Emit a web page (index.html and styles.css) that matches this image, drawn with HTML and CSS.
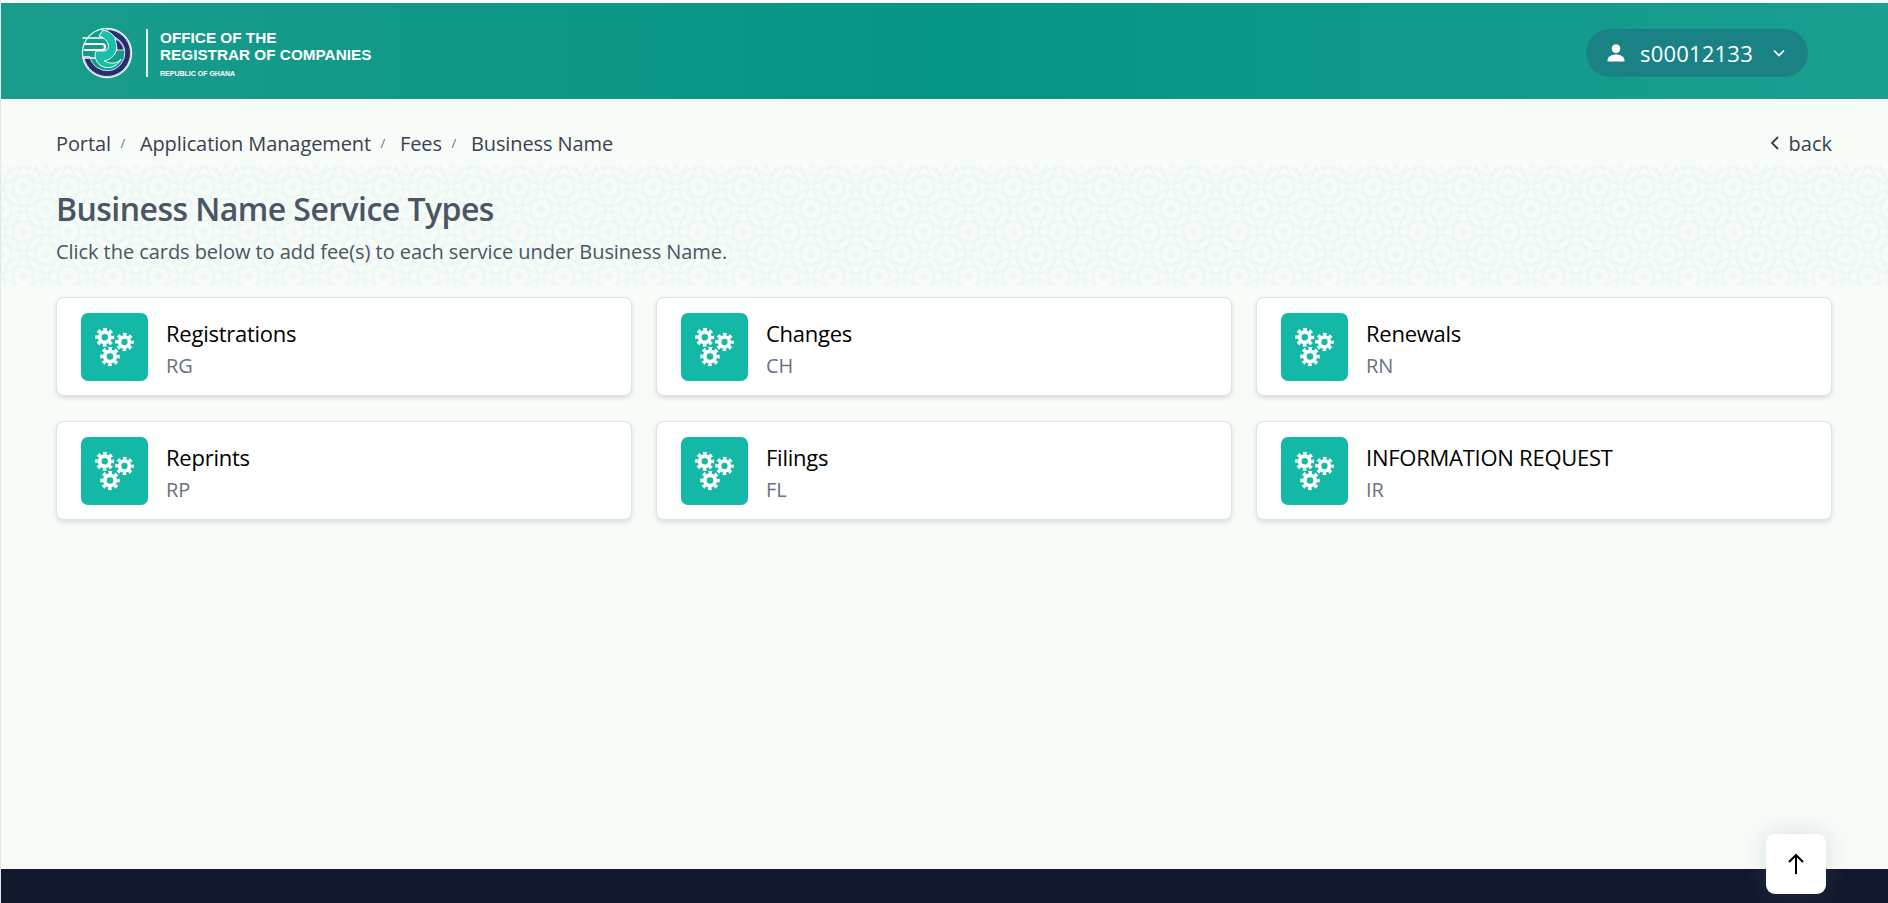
FILE: index.html
```html
<!DOCTYPE html>
<html lang="en">
<head>
    <meta charset="UTF-8">
    <meta name="viewport" content="width=device-width, initial-scale=1.0">
    <title>Business Name Service Types</title>
    <link rel="stylesheet" href="styles.css">
</head>
<body>
    <svg class="defs" width="0" height="0">
        <defs>
            <symbol id="gear" viewBox="0 0 20 20">
                <circle cx="10" cy="10" r="5.2" fill="none" stroke="#fff" stroke-width="3.8"/>
                <circle cx="10" cy="10" r="8.2" fill="none" stroke="#fff" stroke-width="3.2" stroke-dasharray="3.6 2.84" stroke-dashoffset="1.8"/>
            </symbol>
            <symbol id="cogs" viewBox="0 0 67 68">
                <use href="#gear" x="14" y="14.500" width="19.500" height="19.500"/>
                <use href="#gear" x="34" y="19.500" width="19" height="19"/>
                <use href="#gear" x="19" y="33.500" width="20" height="20"/>
            </symbol>
            <g id="rosette">
                <circle r="19.6" fill="none" stroke="#edf7f3" stroke-width="2.2"/>
                <circle r="10.6" fill="none" stroke="#edf7f3" stroke-width="2.2"/>
                <path d="M0-5.600Q1.600-1.600 5.600 0 1.600 1.600 0 5.600-1.600 1.600-5.600 0-1.600-1.600 0-5.600z" fill="#edf7f3"/>
            </g>
        </defs>
    </svg>

    <header class="topbar">
        <div class="brand">
            <svg class="brand-logo" viewBox="0 0 52 52" width="52" height="52">
                <circle cx="26" cy="26" r="25.2" fill="#fff"/>
                <circle cx="26" cy="26" r="24" fill="#129b8a"/>
                <path d="M26 2.500a23.500 23.500 0 1 1-23.200 27h6a17.700 17.700 0 1 0 17.200-21.200z" fill="#2b2a72" stroke="#fff" stroke-width=".8"/>
                <path d="M1.500 11h22c9 0 12 6 12 10s-3 9-9 10H2" fill="none" stroke="#fff" stroke-width="1.400"/>
                <path d="M22 3c10 2 15 9 14 18-1 7-7 12-13 13 8 4 14 2 17-2-4 9-15 11-21 6-5-4-6-10-4-14h9c3-1 4-4 3-7-1-4-5-7-9-8z" fill="#19bfa8" stroke="#fff" stroke-width="1"/>
                <path d="M3 17h18c2 0 3 1 3 3s-1 3-3 3H3" fill="none" stroke="#fff" stroke-width="2.200"/>
                <path d="M34 12c5 2 8 6 9 11h-7c0-4-1-8-2-11z" fill="#2b2a72" stroke="#fff" stroke-width=".8"/>
            </svg>
            <div class="brand-rule"></div>
            <div class="brand-text">
                <div class="brand-name">OFFICE OF THE<br>REGISTRAR OF COMPANIES</div>
                <div class="brand-sub">REPUBLIC OF GHANA</div>
            </div>
        </div>
        <div class="user-pill">
            <svg class="user-icon" viewBox="0 0 18 18" width="18" height="18">
                <circle cx="9" cy="4.600" r="4.300" fill="#fff"/>
                <path d="M.4 17.500c0-5 3.600-7 8.600-7s8.600 2 8.600 7z" fill="#fff"/>
            </svg>
            <span class="user-name">s00012133</span>
            <svg class="user-caret" viewBox="0 0 12 8" width="12" height="8">
                <path d="M1 1.500l5 5 5-5" fill="none" stroke="#fff" stroke-width="1.700"/>
            </svg>
        </div>
    </header>

    <main class="content">
        <div class="crumb-row">
            <nav class="crumbs">
                <a>Portal</a><span class="sep">/</span>
                <a>Application Management</a><span class="sep">/</span>
                <a>Fees</a><span class="sep">/</span>
                <a>Business Name</a>
            </nav>
            <a class="back">
                <svg viewBox="0 0 10 16" width="10" height="16">
                    <path d="M8 2L2 8l6 6" fill="none" stroke="#374151" stroke-width="1.8"/>
                </svg>
                back
            </a>
        </div>

        <section class="hero">
            <svg class="hero-bg" width="100%" height="100%">
                <defs>
                    <pattern id="rings" x="0" y="-0.8" width="45" height="45" patternUnits="userSpaceOnUse">
                        <use href="#rosette" x="22.5" y="22.5"/>
                        <use href="#rosette" x="0" y="0"/>
                        <use href="#rosette" x="45" y="0"/>
                        <use href="#rosette" x="0" y="45"/>
                        <use href="#rosette" x="45" y="45"/>
                    </pattern>
                </defs>
                <rect width="100%" height="100%" fill="url(#rings)"/>
            </svg>
            <h1 class="page-title">Business Name Service Types</h1>
            <p class="page-sub">Click the cards below to add fee(s) to each service under Business Name.</p>
        </section>

        <section class="cards">
            <a class="card">
                <div class="card-icon"><svg width="67" height="68"><use href="#cogs"/></svg></div>
                <div class="card-text"><div class="card-title">Registrations</div><div class="card-code">RG</div></div>
            </a>
            <a class="card">
                <div class="card-icon"><svg width="67" height="68"><use href="#cogs"/></svg></div>
                <div class="card-text"><div class="card-title">Changes</div><div class="card-code">CH</div></div>
            </a>
            <a class="card">
                <div class="card-icon"><svg width="67" height="68"><use href="#cogs"/></svg></div>
                <div class="card-text"><div class="card-title">Renewals</div><div class="card-code">RN</div></div>
            </a>
            <a class="card">
                <div class="card-icon"><svg width="67" height="68"><use href="#cogs"/></svg></div>
                <div class="card-text"><div class="card-title">Reprints</div><div class="card-code">RP</div></div>
            </a>
            <a class="card">
                <div class="card-icon"><svg width="67" height="68"><use href="#cogs"/></svg></div>
                <div class="card-text"><div class="card-title">Filings</div><div class="card-code">FL</div></div>
            </a>
            <a class="card">
                <div class="card-icon"><svg width="67" height="68"><use href="#cogs"/></svg></div>
                <div class="card-text"><div class="card-title">INFORMATION REQUEST</div><div class="card-code">IR</div></div>
            </a>
        </section>
    </main>

    <footer class="footer"></footer>

    <button class="to-top">
        <svg viewBox="0 0 18 22" width="18" height="22">
            <path d="M9 21V2M2 9l7-7 7 7" fill="none" stroke="#000" stroke-width="2"/>
        </svg>
    </button>
</body>
</html>
```

FILE: styles.css
```css
* {
    box-sizing: border-box;
}
html, body {
    height: 100%;
}
body {
    margin: 0;
    padding-top: 3px;
    height: 903px;
    overflow: hidden;
    display: flex;
    flex-direction: column;
    font-family: "Open Sans", "Noto Sans", Arial, sans-serif;
    background-color: #f7fcf8;
    border-left: 1px solid #e3e7e6;
}
.defs {
    position: absolute;
}
.topbar {
    height: 96px;
    flex: none;
    display: flex;
    justify-content: space-between;
    align-items: center;
    padding: 4px 80px 0 80px;
    background: linear-gradient(90deg, #1a9c8b 0%, #059583 50%, #1a9f8f 100%);
}
.brand {
    display: flex;
    align-items: center;
}
.brand-logo {
    display: block;
}
.brand-rule {
    width: 2px;
    height: 48px;
    margin: 0 12px 0 13px;
    background-color: #e6f4f1;
}
.brand-text {
    color: #fff;
    font-family: "Liberation Sans", Arial, sans-serif;
    font-weight: bold;
}
.brand-name {
    font-size: 15.3px;
    line-height: 17px;
}
.brand-sub {
    margin-top: 6px;
    font-size: 7px;
    line-height: 9px;
}
.user-pill {
    width: 222px;
    height: 48px;
    display: flex;
    align-items: center;
    padding-left: 21px;
    border-radius: 24px;
    background-color: #1a8285;
    color: #fff;
}
.user-name {
    margin-left: 15px;
    font-size: 22px;
    letter-spacing: 0.2px;
}
.user-caret {
    margin-left: 20px;
}
.content {
    flex: 1;
}
.crumb-row {
    height: 66px;
    display: flex;
    justify-content: space-between;
    align-items: center;
    padding: 22px 56px 0 55px;
    color: #374151;
    font-size: 20px;
}
.crumbs a {
    letter-spacing: -0.1px;
}
.crumbs .sep {
    margin: 0 9.5px;
    font-size: 13px;
    vertical-align: 3px;
    color: #6b7280;
}
.back {
    display: flex;
    align-items: center;
    gap: 9px;
}
.hero {
    position: relative;
    height: 120px;
    padding: 22px 55px 0;
}
.hero-bg {
    position: absolute;
    top: 0;
    left: 0;
    z-index: -1;
}
.page-title {
    margin: 0;
    font-size: 32px;
    line-height: 44px;
    font-weight: 600;
    color: #4b5563;
    letter-spacing: -0.55px;
}
.page-sub {
    margin: 8px 0 0;
    font-size: 20px;
    line-height: 26px;
    color: #4b5563;
    letter-spacing: -0.06px;
}
.cards {
    display: grid;
    grid-template-columns: repeat(3, 1fr);
    gap: 25px 24px;
    padding: 12px 56px 0 55px;
}
.card {
    height: 99px;
    display: flex;
    align-items: center;
    gap: 18px;
    padding: 0 24px;
    background-color: #fff;
    border: 1px solid #dfe2e6;
    border-radius: 8px;
    box-shadow: 0 2px 5px rgba(0, 0, 0, 0.13);
}
.card-icon {
    width: 67px;
    height: 68px;
    flex: none;
    border-radius: 7px;
    background-color: #14b8a6;
}
.card-icon svg {
    display: block;
}
.card-text {
    padding-top: 3px;
}
.card-title {
    font-size: 22px;
    line-height: 30px;
    color: #000;
    letter-spacing: -0.25px;
}
.card-code {
    margin-top: 4px;
    font-size: 20px;
    line-height: 27px;
    color: #6b7280;
}
.footer {
    height: 34px;
    flex: none;
    background-color: #111a2c;
}
.to-top {
    position: absolute;
    top: 834px;
    left: 1766px;
    width: 60px;
    height: 60px;
    padding: 0;
    display: flex;
    align-items: center;
    justify-content: center;
    border: none;
    border-radius: 9px;
    background-color: #fff;
    box-shadow: 0 0 24px rgba(100, 110, 150, 0.22);
}
```
